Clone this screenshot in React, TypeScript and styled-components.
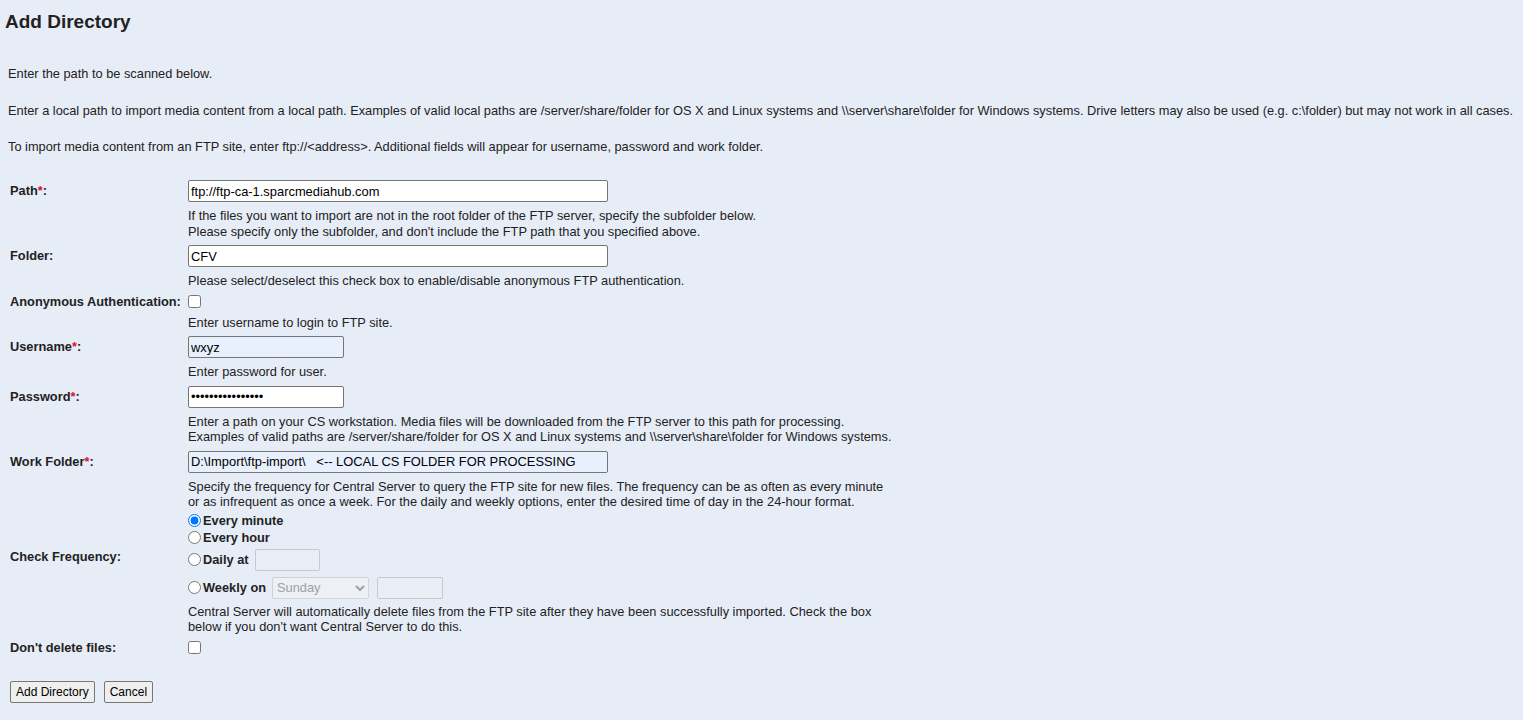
import React from 'react';
import styled, {createGlobalStyle} from 'styled-components';

const GlobalStyle = createGlobalStyle`
  html, body {
    margin: 0;
    padding: 0;
    background: #e7edf7;
  }
  body {
    font-family: "Liberation Sans", Arial, Helvetica, sans-serif;
    font-size: 12.8px;
    color: #222222;
  }
`;

const Page = styled.div`
  display: flex;
  flex-direction: column;
  min-height: 720px;
  box-sizing: border-box;
`;

const Title = styled.h1`
  margin: 0;
  padding: 11px 5px;
  font-size: 19px;
  line-height: 22px;
  font-weight: bold;
  color: #222222;
`;

const Intro = styled.div`
  display: flex;
  flex-direction: column;
  gap: 22.5px;
  padding: 23px 8px 0 8px;
`;

const Para = styled.p`
  margin: 0;
  line-height: 14px;
`;

const FormGrid = styled.div`
  display: grid;
  grid-template-columns: 176px 1fr;
  column-gap: 2px;
  row-gap: 2px;
  margin: 24px 0 0 8px;
`;

const LabelCell = styled.div`
  display: flex;
  align-items: center;
  padding: 2px;
  font-weight: bold;
  line-height: 14px;
  white-space: nowrap;
`;

const FieldCell = styled.div`
  display: flex;
  align-items: center;
  padding: 2px;
`;

const Required = styled.span`
  color: #e0112b;
`;

const Help = styled.div`
  padding: 2px;
  line-height: 15.5px;
`;

const TextInput = styled.input<{$w: number; $filled?: boolean}>`
  box-sizing: border-box;
  width: ${p => p.$w}px;
  height: 22px;
  margin: 0;
  padding: 1px 2px;
  border: 1px solid #767676;
  border-radius: 2px;
  background: ${p => (p.$filled ? '#e8f0fe' : '#ffffff')};
  font-family: inherit;
  font-size: 12.9px;
  color: #000000;
  white-space: pre;

  &:disabled {
    background: rgba(239, 239, 239, 0.3);
    border-color: rgba(118, 118, 118, 0.3);
  }
`;

const Check = styled.input`
  width: 13px;
  height: 13px;
  margin: 0;
`;

const RadioList = styled.div`
  display: flex;
  flex-direction: column;
  margin: -4px 0 -1px 0;
`;

const RadioRow = styled.label<{$h: number; $top?: number}>`
  display: flex;
  align-items: center;
  height: ${p => p.$h}px;
  margin-top: ${p => p.$top || 0}px;
  font-weight: bold;
  font-size: 12.8px;
`;

const Radio = styled.input`
  width: 13px;
  height: 13px;
  margin: 0 2px 0 0;
`;

const RadioText = styled.span`
  margin-right: 6px;
`;

const DaySelect = styled.select`
  box-sizing: border-box;
  width: 97px;
  height: 22px;
  margin: 0 8px 0 0;
  font-family: inherit;
  font-size: 12.8px;
`;

const Buttons = styled.div`
  display: flex;
  gap: 9px;
  padding: 24px 0 0 10px;
`;

const Button = styled.button`
  box-sizing: border-box;
  height: 22px;
  padding: 1px 5px;
  margin: 0;
  border: 1px solid #767676;
  border-radius: 2px;
  background: #efefef;
  font-family: inherit;
  font-size: 12px;
  color: #000000;
`;

export default function App(): JSX.Element {
  return (
    <Page>
      <GlobalStyle />
      <Title>Add Directory</Title>
      <Intro>
        <Para>Enter the path to be scanned below.</Para>
        <Para>
          Enter a local path to import media content from a local path. Examples of valid local paths
          are /server/share/folder for OS X and Linux systems and {'\\\\server\\share\\folder'} for
          Windows systems. Drive letters may also be used (e.g. {'c:\\folder'}) but may not work in
          all cases.
        </Para>
        <Para>
          To import media content from an FTP site, enter ftp://&lt;address&gt;. Additional fields
          will appear for username, password and work folder.
        </Para>
      </Intro>

      <FormGrid>
        <LabelCell>
          Path<Required>*</Required>:
        </LabelCell>
        <FieldCell>
          <TextInput $w={420} defaultValue="ftp://ftp-ca-1.sparcmediahub.com" />
        </FieldCell>

        <div />
        <Help>
          If the files you want to import are not in the root folder of the FTP server, specify the
          subfolder below.
          <br />
          Please specify only the subfolder, and don't include the FTP path that you specified above.
        </Help>

        <LabelCell>Folder:</LabelCell>
        <FieldCell>
          <TextInput $w={420} defaultValue="CFV" />
        </FieldCell>

        <div />
        <Help>Please select/deselect this check box to enable/disable anonymous FTP authentication.</Help>

        <LabelCell>Anonymous Authentication:</LabelCell>
        <FieldCell>
          <Check type="checkbox" />
        </FieldCell>

        <div />
        <Help>Enter username to login to FTP site.</Help>

        <LabelCell>
          Username<Required>*</Required>:
        </LabelCell>
        <FieldCell>
          <TextInput $w={156} $filled defaultValue="wxyz" />
        </FieldCell>

        <div />
        <Help>Enter password for user.</Help>

        <LabelCell>
          Password<Required>*</Required>:
        </LabelCell>
        <FieldCell>
          <TextInput $w={156} type="password" defaultValue="sparcftppassword" />
        </FieldCell>

        <div />
        <Help>
          Enter a path on your CS workstation. Media files will be downloaded from the FTP server to
          this path for processing.
          <br />
          Examples of valid paths are /server/share/folder for OS X and Linux systems and{' '}
          {'\\\\server\\share\\folder'} for Windows systems.
        </Help>

        <LabelCell>
          Work Folder<Required>*</Required>:
        </LabelCell>
        <FieldCell>
          <TextInput
            $w={420}
            $filled
            defaultValue={'D:\\Import\\ftp-import\\   <-- LOCAL CS FOLDER FOR PROCESSING'}
          />
        </FieldCell>

        <div />
        <Help>
          Specify the frequency for Central Server to query the FTP site for new files. The frequency
          can be as often as every minute
          <br />
          or as infrequent as once a week. For the daily and weekly options, enter the desired time of
          day in the 24-hour format.
        </Help>

        <LabelCell>Check Frequency:</LabelCell>
        <FieldCell>
          <RadioList>
            <RadioRow $h={17}>
              <Radio type="radio" name="freq" defaultChecked />
              <RadioText>Every minute</RadioText>
            </RadioRow>
            <RadioRow $h={17}>
              <Radio type="radio" name="freq" />
              <RadioText>Every hour</RadioText>
            </RadioRow>
            <RadioRow $h={22} $top={3}>
              <Radio type="radio" name="freq" />
              <RadioText>Daily at</RadioText>
              <TextInput $w={65} disabled />
            </RadioRow>
            <RadioRow $h={22} $top={6}>
              <Radio type="radio" name="freq" />
              <RadioText>Weekly on</RadioText>
              <DaySelect disabled defaultValue="Sunday">
                <option>Sunday</option>
                <option>Monday</option>
                <option>Tuesday</option>
                <option>Wednesday</option>
                <option>Thursday</option>
                <option>Friday</option>
                <option>Saturday</option>
              </DaySelect>
              <TextInput $w={66} disabled />
            </RadioRow>
          </RadioList>
        </FieldCell>

        <div />
        <Help>
          Central Server will automatically delete files from the FTP site after they have been
          successfully imported. Check the box
          <br />
          below if you don't want Central Server to do this.
        </Help>

        <LabelCell>Don't delete files:</LabelCell>
        <FieldCell>
          <Check type="checkbox" />
        </FieldCell>
      </FormGrid>

      <Buttons>
        <Button>Add Directory</Button>
        <Button>Cancel</Button>
      </Buttons>
    </Page>
  );
}
